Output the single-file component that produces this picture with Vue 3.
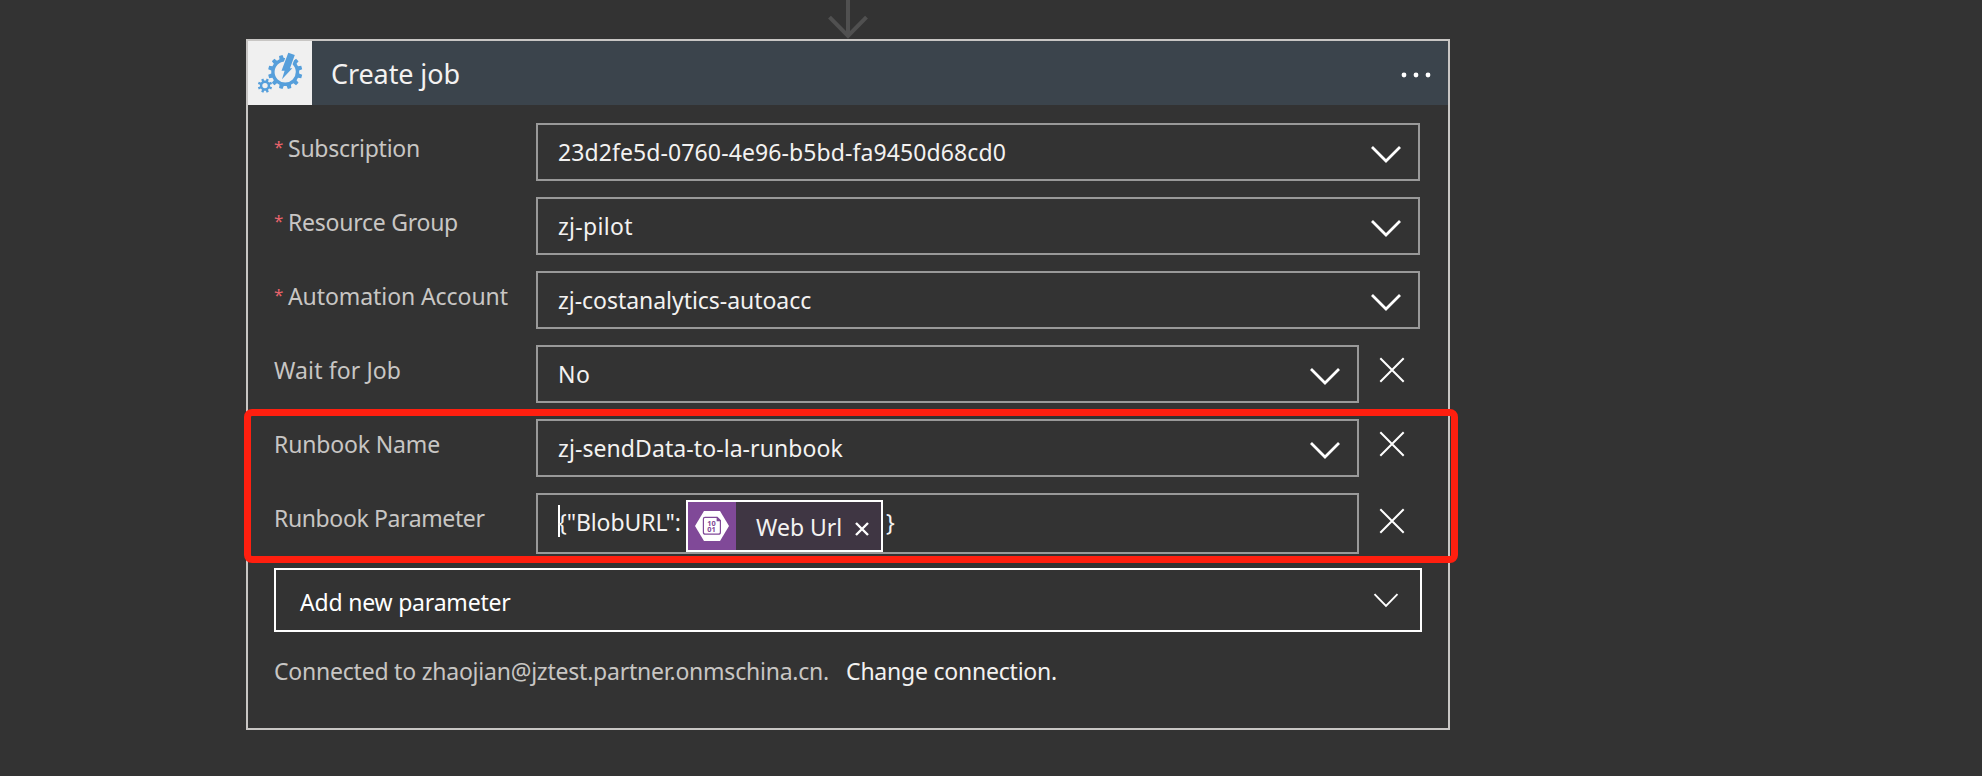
<script setup>
const rows = [
  { label: 'Subscription', value: '23d2fe5d-0760-4e96-b5bd-fa9450d68cd0', required: true, labelTrack: -0.25, valueTrack: 0.1 },
  { label: 'Resource Group', value: 'zj-pilot', required: true, labelTrack: -0.25, valueTrack: 0.3 },
  { label: 'Automation Account', value: 'zj-costanalytics-autoacc', required: true, labelTrack: -0.08, valueTrack: -0.04 },
  { label: 'Wait for Job', value: 'No', labelTrack: 0.12, valueTrack: 0.5 },
  { label: 'Runbook Name', value: 'zj-sendData-to-la-runbook', labelTrack: -0.15, valueTrack: 0.08 },
]
function gear(cx, cy, teeth, outer, root, hole) {
  const step = (Math.PI * 2) / teeth
  const pts = []
  for (let i = 0; i < teeth; i++) {
    const a = (i + 0.5) * step
    for (const [f, r] of [[-0.3, root], [-0.2, outer], [0.2, outer], [0.3, root]]) {
      pts.push((cx + r * Math.cos(a + f * step)).toFixed(2) + ' ' + (cy + r * Math.sin(a + f * step)).toFixed(2))
    }
  }
  return `M${pts.join('L')}ZM${cx - hole} ${cy}a${hole} ${hole} 0 1 0 ${hole * 2} 0a${hole} ${hole} 0 1 0 ${-hole * 2} 0Z`
}
const bigGear = gear(37.2, 31, 12, 17.2, 14, 10.6)
const smallGear = gear(17, 44.6, 8, 7.3, 5.1, 2.7)
</script>

<template>
  <main class="canvas">
    <svg class="arrow" viewBox="0 0 40 39"><path d="M20 0V36M1.5 17.2L20 36L38.5 17.2" /></svg>
    <section class="card">
      <header class="head">
        <svg class="logo" viewBox="0 0 64 64">
          <path class="blue" fill-rule="evenodd" :d="bigGear" />
          <path class="blue" fill-rule="evenodd" :d="smallGear" />
          <path class="bolt" d="M40.3 11.7L46.8 14L42 27.3H44.3L34 38.3L36.6 29.7H33.5Z" />
        </svg>
        <h1>Create job</h1>
        <svg class="dots" viewBox="0 0 30 6"><circle cx="3" cy="3" r="2.4" /><circle cx="15" cy="3" r="2.4" /><circle cx="27" cy="3" r="2.4" /></svg>
      </header>
      <div class="body">
        <div v-for="r in rows" :key="r.label" class="row">
          <div class="label"><span v-if="r.required" class="star">*</span><span :style="{ letterSpacing: r.labelTrack + 'px' }">{{ r.label }}</span></div>
          <div class="box">
            <span :style="{ letterSpacing: r.valueTrack + 'px' }">{{ r.value }}</span>
            <svg class="chev" viewBox="0 0 32 18"><path d="M2 2L16 16L30 2" /></svg>
          </div>
          <svg v-if="!r.required" class="close" viewBox="0 0 26 26"><path d="M1.3 1.3L24.7 24.7M24.7 1.3L1.3 24.7" /></svg>
        </div>
        <div class="row param">
          <div class="label"><span class="long">Runbook Parameter</span></div>
          <div class="box editor">
            <i class="caret"></i><span class="json">{"BlobURL":</span>
            <span class="token">
              <svg class="blob" viewBox="0 0 48 48">
                <path class="hex" d="M7 24L16 9H32L41 24L32 39H16Z" />
                <path class="doc" d="M17 15.3H29.2L32.4 18.5V30.2Q32.4 32.2 30.4 32.2H17.4Q15.4 32.2 15.4 30.2V17Q15.4 15.3 17 15.3Z" />
                <path class="fold" d="M28.6 14.8L33 19.2H28.6Z" />
                <text x="23.6" y="23.6">10</text><text x="23.6" y="30.4">01</text>
              </svg>
              <span class="name">Web Url</span>
              <svg class="remove" viewBox="0 0 14 14"><path d="M1 1L13 13M13 1L1 13" /></svg>
            </span>
            <span class="brace">}</span>
          </div>
          <svg class="close" viewBox="0 0 26 26"><path d="M1.3 1.3L24.7 24.7M24.7 1.3L1.3 24.7" /></svg>
        </div>
        <div class="add">
          <span>Add new parameter</span>
          <svg viewBox="0 0 26 15"><path d="M1.5 1.2L13 13L24.5 1.2" /></svg>
        </div>
        <p class="conn"><span>Connected to zhaojian@jztest.partner.onmschina.cn.</span><a>Change connection.</a></p>
      </div>
      <div class="mark"></div>
    </section>
  </main>
</template>

<style>
body { background: #333; }
</style>
<style scoped>
.canvas { box-sizing: border-box; height: 776px; padding-left: 246px; background: #333; overflow: hidden; font: 23px/50px "Noto Sans", "Open Sans", sans-serif; color: #f3f2f1; white-space: nowrap; }
.canvas * { box-sizing: border-box; }
svg { display: block; flex: none; fill: none; }
.arrow { width: 40px; height: 39px; margin-left: 582px; stroke: #505050; stroke-width: 4; }
.card { position: relative; width: 1204px; height: 691px; border: 2px solid #c8c6c4; }
.head { display: flex; align-items: center; height: 64px; padding-right: 17px; background: #3b444c; }
.logo { width: 64px; height: 64px; background: #f0f0f0; }
.blue { fill: #569fdb; }
.bolt { fill: #569fdb; stroke: #f0f0f0; stroke-width: 2; paint-order: stroke; }
h1 { flex: 1; margin: 0 0 0 19px; font-size: 27px; font-weight: 400; line-height: 65px; letter-spacing: -0.1px; }
.dots { width: 30px; height: 6px; margin-top: 4px; fill: #fff; }
.body { padding: 18px 26px 0; }
.row { display: flex; height: 58px; margin-bottom: 16px; }
.label { flex: none; display: flex; width: 262px; color: #c8c6c4; }
.star { width: 14px; color: #e8636b; font-size: 17px; line-height: 48px; }
.long { letter-spacing: -0.38px; }
.box { flex: none; display: flex; justify-content: space-between; width: 884px; border: 2px solid #999; padding: 0 16px 0 20px; line-height: 54px; }
.row:nth-child(n+4) .box { width: 823px; }
.chev { width: 32px; height: 18px; margin-top: 20px; stroke: #fff; stroke-width: 2.8; }
.close { width: 26px; height: 26px; margin: 12px 0 0 20px; stroke: #fff; stroke-width: 2; }
.param { height: 61px; margin-bottom: 14px; }
.param .close { margin-top: 15px; }
.box.editor { justify-content: flex-start; }
.caret { width: 2px; height: 32px; margin: 10px -2px 0 0; background: #fff; }
.json { width: 128px; letter-spacing: -0.1px; }
.token { display: flex; width: 197px; height: 52px; margin-top: 5px; border: 2px solid #fff; background: #3f3643; line-height: 50px; }
.blob { width: 48px; height: 48px; background: #804998; }
.hex { fill: #fff; }
.doc { stroke: #804998; stroke-width: 1.2; }
.fold { fill: #804998; }
.blob text { fill: #804998; font: 700 7.4px "Noto Sans", sans-serif; text-anchor: middle; }
.name { width: 86px; margin-left: 20px; }
.remove { width: 14px; height: 14px; margin: 20px 0 0 13px; stroke: #fff; stroke-width: 2.4; }
.brace { margin-left: 3px; }
.add { display: flex; justify-content: space-between; width: 1148px; height: 64px; padding: 0 21px 0 24px; border: 2px solid #fff; color: #fff; line-height: 64px; letter-spacing: -0.2px; }
.add svg { width: 26px; height: 15px; margin-top: 23px; stroke: #fff; stroke-width: 1.9; }
.conn { margin: 14px 0 0; display: flex; color: #c8c6c4; letter-spacing: -0.22px; }
.conn a { margin-left: 17px; color: #f3f2f1; }
.mark { position: absolute; left: -4px; top: 368px; width: 1214px; height: 154px; border: 7px solid #ff1f0f; border-radius: 8px; }
</style>
